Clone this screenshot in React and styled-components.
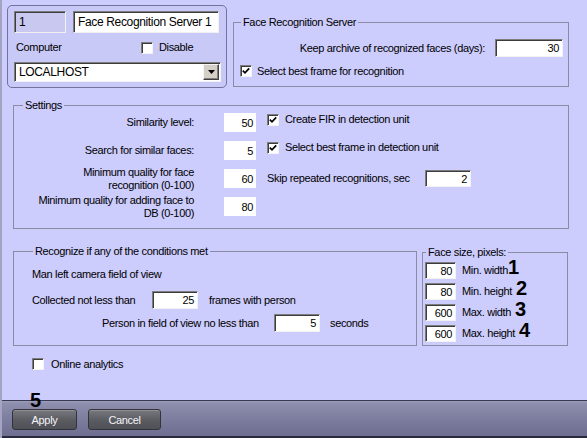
import React from 'react';
import styled, { createGlobalStyle } from 'styled-components';

const GlobalStyle = createGlobalStyle`
    html, body {
        margin: 0;
        padding: 0;
        background: #ccccfd;
    }
    body {
        font-family: "Liberation Sans", Arial, sans-serif;
        font-size: 11px;
        letter-spacing: -0.35px;
        color: #000;
    }
`;

//styles
const Window = styled.div`
    width: 587px;
    height: 438px;
    box-sizing: border-box;
    background: #ccccfd;
    border-left: 2px solid #a4a4c2;
    display: flex;
    flex-direction: column;
    overflow: hidden;
`;

const Content = styled.div`
    flex: 1;
    display: flex;
    flex-direction: column;
`;

const TopRow = styled.div`
    display: flex;
    align-items: flex-start;
    gap: 6px;
    padding: 5px 0 0 5px;
`;

const ServerCard = styled.div`
    width: 220px;
    height: 83px;
    box-sizing: border-box;
    border: 1px solid #72729c;
    border-radius: 5px;
    background: #c9c9f7;
    padding: 5px 6px;
    display: flex;
    flex-direction: column;
`;

const Row = styled.div`
    display: flex;
    align-items: ${({ align }) => align || 'center'};
    justify-content: ${({ end }) => end ? 'flex-end' : 'flex-start'};
    height: ${({ h }) => h ? `${h}px` : 'auto'};
    gap: ${({ gap }) => gap || 0}px;
    margin-top: ${({ mt }) => mt || 0}px;
    margin-left: ${({ ml }) => ml || 0}px;
    align-self: ${({ top }) => top ? 'flex-start' : 'auto'};
    flex-shrink: 0;
`;

const Label = styled.span`
    display: inline-block;
    width: ${({ w }) => w ? `${w}px` : 'auto'};
    margin-left: ${({ ml }) => ml || 0}px;
    text-align: ${({ right }) => right ? 'right' : 'left'};
    line-height: 13px;
    white-space: nowrap;
    flex-shrink: 0;
`;

const Field = styled.div`
    box-sizing: border-box;
    width: ${({ w }) => w}px;
    height: ${({ h }) => h || 19}px;
    margin-left: ${({ ml }) => ml || 0}px;
    background: ${({ disabled }) => disabled ? '#c8c8f0' : '#fff'};
    border: ${({ flat }) => flat ? 'none' : '1px solid'};
    border-color: #7d7d7d #f2f2f2 #f2f2f2 #7d7d7d;
    box-shadow: ${({ flat }) => flat ? 'none' : 'inset 1px 1px 0 #3c3c3c'};
    display: flex;
    align-items: center;
    justify-content: ${({ left }) => left ? 'flex-start' : 'flex-end'};
    padding: ${({ left }) => left ? '0 0 0 4px' : '0 3px 0 0'};
    font-size: ${({ big }) => big ? 12 : 11}px;
    white-space: nowrap;
    flex-shrink: 0;
`;

const Select = styled(Field)`
    justify-content: space-between;
    padding: 0 1px 0 4px;
`;

const ArrowButton = styled.span`
    box-sizing: border-box;
    width: 16px;
    height: 16px;
    background: #d4d0c8;
    border: 1px solid;
    border-color: #f4f4f4 #404040 #404040 #f4f4f4;
    box-shadow: inset -1px -1px 0 #808080;
    display: flex;
    align-items: center;
    justify-content: center;
`;

const Box = styled.span`
    box-sizing: border-box;
    width: 12px;
    height: 12px;
    background: #fff;
    border: 1px solid;
    border-color: #7d7d7d #f4f4f4 #f4f4f4 #7d7d7d;
    box-shadow: inset 1px 1px 0 #3c3c3c;
    display: inline-flex;
    align-items: center;
    justify-content: center;
    flex-shrink: 0;
`;

const Group = styled.fieldset`
    box-sizing: border-box;
    width: ${({ w }) => w}px;
    height: ${({ h }) => h}px;
    margin: ${({ m }) => m || 0};
    padding: ${({ pad }) => pad || 0};
    border: 1px solid #8b8ba6;
    min-width: 0;
    flex-shrink: 0;
`;

const Legend = styled.legend`
    padding: 0 2px;
    margin-left: 1px;
    line-height: 13px;
`;

const SettingsBody = styled.div`
    display: flex;
    flex-direction: column;
    gap: 9px;
`;

const BottomRow = styled.div`
    display: flex;
    align-items: flex-start;
    gap: 5px;
    margin: 16px 0 0 11px;
`;

const SizeList = styled.div`
    display: flex;
    flex-direction: column;
    gap: 4px;
`;

const SizeLabel = styled.span`
    margin-left: 6px;
    line-height: 17px;
    white-space: nowrap;
`;

const Marker = styled.span`
    font-size: 20px;
    font-weight: bold;
    letter-spacing: 0;
    line-height: 0;
    margin-left: ${({ gap }) => gap ? 4 : 0}px;
`;

const Footer = styled.div`
    position: relative;
    height: 38px;
    box-sizing: border-box;
    border-top: 1px solid #383852;
    border-bottom: 2px solid #2a2a3e;
    background: linear-gradient(#a0a0bc 0, #8e8eae 2px, #7a7a9c 60%, #6e6e90 100%);
    display: flex;
    gap: 11px;
    padding: 8px 0 0 10px;
`;

const Button = styled.div`
    box-sizing: border-box;
    width: ${({ w }) => w}px;
    height: 21px;
    border: 1px solid #33333b;
    border-radius: 3px;
    background: linear-gradient(#78787f, #5a5a61 55%, #505057);
    box-shadow: inset 0 1px 0 rgba(255, 255, 255, 0.18);
    color: #f4f4f8;
    display: flex;
    align-items: center;
    justify-content: center;
`;

const FooterMarker = styled.span`
    position: absolute;
    left: 28px;
    top: -9px;
    font-size: 20px;
    font-weight: bold;
    letter-spacing: 0;
    line-height: 16px;
`;

const Check = ({ checked }) => (
    <Box>
        {checked && (
            <svg width="8" height="8" viewBox="0 0 8 8">
                <path d="M0.8 3.6 L3 5.8 L7.2 1.4" stroke="#000" strokeWidth="1.7" fill="none" />
            </svg>
        )}
    </Box>
);

const sizes = [
    { value: 80, label: 'Min. width', mark: 1, gap: false },
    { value: 80, label: 'Min. height', mark: 2, gap: true },
    { value: 600, label: 'Max. width', mark: 3, gap: true },
    { value: 600, label: 'Max. height', mark: 4, gap: true },
];

const App = () => {
    return (
        <>
            <GlobalStyle />
            <Window>
                <Content>
                    <TopRow>
                        <ServerCard>
                            <Row h={22} gap={7}>
                                <Field w={52} h={22} left big disabled>1</Field>
                                <Field w={146} h={22} left big>Face Recognition Server 1</Field>
                            </Row>
                            <Row h={29}>
                                <Label w={125} ml={2}>Computer</Label>
                                <Check />
                                <Label ml={6}>Disable</Label>
                            </Row>
                            <Select w={207} h={20} big>
                                LOCALHOST
                                <ArrowButton>
                                    <svg width="7" height="4" viewBox="0 0 7 4">
                                        <path d="M0 0 H7 L3.5 4 Z" fill="#000" />
                                    </svg>
                                </ArrowButton>
                            </Select>
                        </ServerCard>

                        <Group w={336} h={71} m="11px 0 0 0" pad="10px 5px 0 6px">
                            <Legend>Face Recognition Server</Legend>
                            <Row h={18} gap={10} end>
                                <Label>Keep archive of recognized faces (days):</Label>
                                <Field w={68} h={18}>30</Field>
                            </Row>
                            <Row h={12} mt={8}>
                                <Check checked />
                                <Label ml={5}>Select best frame for recognition</Label>
                            </Row>
                        </Group>
                    </TopRow>

                    <Group w={556} h={130} m="11px 0 0 11px" pad="1px 0 0 8px">
                        <Legend>Settings</Legend>
                        <SettingsBody>
                            <Row h={19}>
                                <Label w={172} right>Similarity level:</Label>
                                <Field w={32} ml={30} flat>50</Field>
                                <Row ml={11} top>
                                    <Check checked />
                                    <Label ml={6}>Create FIR in detection unit</Label>
                                </Row>
                            </Row>
                            <Row h={19}>
                                <Label w={172} right>Search for similar faces:</Label>
                                <Field w={32} ml={30} flat>5</Field>
                                <Row ml={11} top>
                                    <Check checked />
                                    <Label ml={6}>Select best frame in detection unit</Label>
                                </Row>
                            </Row>
                            <Row h={19}>
                                <Label w={172} right>Minimum quality for face<br />recognition (0-100)</Label>
                                <Field w={32} ml={30} flat>60</Field>
                                <Label w={150} ml={11}>Skip repeated recognitions, sec</Label>
                                <Field w={46} h={17} ml={8}>2</Field>
                            </Row>
                            <Row h={19}>
                                <Label w={172} right>Minimum quality for adding face to<br />DB (0-100)</Label>
                                <Field w={32} ml={30} flat>80</Field>
                            </Row>
                        </SettingsBody>
                    </Group>

                    <BottomRow>
                        <Group w={404} h={101} pad="10px 0 0 18px">
                            <Legend>Recognize if any of the conditions met</Legend>
                            <Row h={13}>
                                <Label>Man left camera field of view</Label>
                            </Row>
                            <Row h={18} mt={10}>
                                <Label w={120}>Collected not less than</Label>
                                <Field w={46} h={18}>25</Field>
                                <Label ml={11}>frames with person</Label>
                            </Row>
                            <Row h={18} mt={5} ml={70}>
                                <Label w={172}>Person in field of view no less than</Label>
                                <Field w={46} h={18}>5</Field>
                                <Label ml={10}>seconds</Label>
                            </Row>
                        </Group>

                        <Group w={146} h={100} m="1px 0 0 0" pad="3px 0 0 2px">
                            <Legend>Face size, pixels:</Legend>
                            <SizeList>
                                {sizes.map(({ value, label, mark, gap }) => (
                                    <Row h={17} key={label}>
                                        <Field w={31} h={17}>{value}</Field>
                                        <SizeLabel>
                                            {label}
                                            <Marker gap={gap}>{mark}</Marker>
                                        </SizeLabel>
                                    </Row>
                                ))}
                            </SizeList>
                        </Group>
                    </BottomRow>

                    <Row h={12} mt={12} ml={30}>
                        <Check />
                        <Label ml={7}>Online analytics</Label>
                    </Row>
                </Content>

                <Footer>
                    <FooterMarker>5</FooterMarker>
                    <Button w={65}>Apply</Button>
                    <Button w={73}>Cancel</Button>
                </Footer>
            </Window>
        </>
    );
};

export default App;
